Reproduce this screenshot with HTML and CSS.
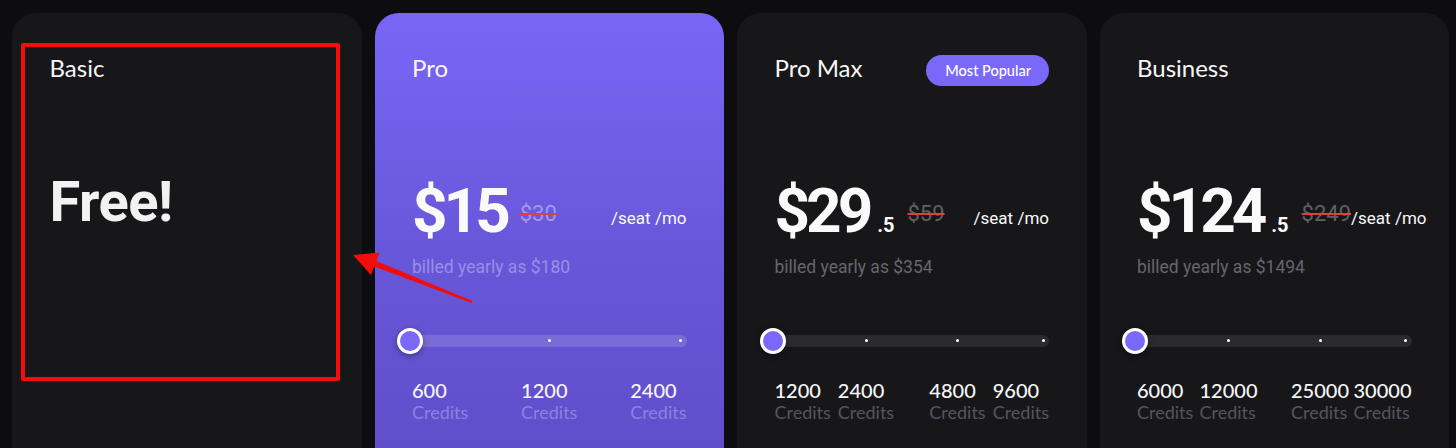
FILE: index.html
```html
<!DOCTYPE html>
<html lang="en">
<head>
<meta charset="utf-8">
<title>Pricing</title>
<link rel="stylesheet" href="styles.css">
</head>
<body>
<main class="plans">
  <section class="card">
    <div class="head"><h2 class="name">Basic</h2></div>
    <div class="free">Free!</div>
  </section>

  <section class="card card-pro">
    <div class="head"><h2 class="name">Pro</h2></div>
    <div class="price-row">
      <div class="price">
        <div class="amount-wrap"><span class="amount">$15</span></div>
        <span class="was">$30</span>
      </div>
      <span class="per">/seat /mo</span>
    </div>
    <p class="billed">billed yearly as $180</p>
    <div class="slider">
      <div class="track"></div>
      <span class="dot" style="left:50%"></span>
      <span class="dot dot-end"></span>
      <span class="thumb"></span>
    </div>
    <div class="ticks">
      <div class="tick"><div class="tick-in"><b>600</b><span>Credits</span></div></div>
      <div class="tick"><div class="tick-in"><b>1200</b><span>Credits</span></div></div>
      <div class="tick"><div class="tick-in"><b>2400</b><span>Credits</span></div></div>
    </div>
  </section>

  <section class="card">
    <div class="head"><h2 class="name">Pro Max</h2><span class="badge">Most Popular</span></div>
    <div class="price-row">
      <div class="price">
        <div class="amount-wrap"><span class="amount">$29</span><span class="cents">.5</span></div>
        <span class="was">$59</span>
      </div>
      <span class="per">/seat /mo</span>
    </div>
    <p class="billed">billed yearly as $354</p>
    <div class="slider">
      <div class="track"></div>
      <span class="dot" style="left:33.4%"></span>
      <span class="dot" style="left:66.8%"></span>
      <span class="dot dot-end"></span>
      <span class="thumb"></span>
    </div>
    <div class="ticks">
      <div class="tick"><div class="tick-in"><b>1200</b><span>Credits</span></div></div>
      <div class="tick"><div class="tick-in"><b>2400</b><span>Credits</span></div></div>
      <div class="tick"><div class="tick-in"><b>4800</b><span>Credits</span></div></div>
      <div class="tick"><div class="tick-in"><b>9600</b><span>Credits</span></div></div>
    </div>
  </section>

  <section class="card">
    <div class="head"><h2 class="name">Business</h2></div>
    <div class="price-row">
      <div class="price">
        <div class="amount-wrap"><span class="amount">$124</span><span class="cents">.5</span></div>
        <span class="was">$249</span>
      </div>
      <span class="per">/seat /mo</span>
    </div>
    <p class="billed">billed yearly as $1494</p>
    <div class="slider">
      <div class="track"></div>
      <span class="dot" style="left:33.4%"></span>
      <span class="dot" style="left:66.8%"></span>
      <span class="dot dot-end"></span>
      <span class="thumb"></span>
    </div>
    <div class="ticks">
      <div class="tick"><div class="tick-in"><b>6000</b><span>Credits</span></div></div>
      <div class="tick"><div class="tick-in"><b>12000</b><span>Credits</span></div></div>
      <div class="tick"><div class="tick-in"><b>25000</b><span>Credits</span></div></div>
      <div class="tick"><div class="tick-in"><b>30000</b><span>Credits</span></div></div>
    </div>
  </section>
</main>

<div class="mark-box"></div>
<svg class="mark-arrow" width="1456" height="448" viewBox="0 0 1456 448" aria-hidden="true">
  <polygon fill="#f20d0d" points="353,255 379.7,252.6 376.4,261 472.4,301.1 471.6,302.9 374.2,266.6 370.9,275"/>
</svg>
</body>
</html>
```

FILE: styles.css
```css
* { box-sizing: border-box; }

html, body {
  margin: 0;
  height: 100%;
  background: #0d0d0f;
  overflow: hidden;
}

body {
  font-family: "Roboto", "Liberation Sans", sans-serif;
  color: #f4f4f5;
}

.plans {
  display: grid;
  grid-template-columns: repeat(4, minmax(0, 1fr));
  gap: 13px;
  padding: 13px 7px 0 12px;
}

.card {
  background: #17171a;
  border-radius: 24px;
  height: 480px;
  padding: 42px 37.5px 0;
  display: flex;
  flex-direction: column;
  min-width: 0;
}

.card-pro {
  background: linear-gradient(180deg, #7a66f6 0%, #6a58dc 45%, #5e4cc6 100%);
}

.head {
  display: flex;
  align-items: center;
  justify-content: space-between;
  min-height: 31px;
}

.name {
  margin: 0 0 5px;
  font-family: "Lato", sans-serif;
  font-weight: 400;
  font-size: 24px;
  line-height: 1;
  color: #f6f6f7;
}

.badge {
  background: #7b68f8;
  color: #fff;
  font-family: "Lato", sans-serif;
  font-weight: 500;
  font-size: 14.5px;
  height: 31px;
  display: flex;
  align-items: center;
  padding: 0 18px 0 19px;
  border-radius: 16px;
}

.free {
  margin-top: 85px;
  font-weight: 700;
  font-size: 56px;
  line-height: 62px;
  letter-spacing: -0.5px;
  color: #f2f2f3;
}

.price-row {
  margin-top: 94px;
  display: flex;
  align-items: center;
  justify-content: space-between;
  height: 62px;
}

.price {
  display: flex;
  align-items: center;
}

.amount-wrap {
  display: flex;
  align-items: baseline;
}

.amount {
  font-weight: 700;
  font-size: 62px;
  line-height: 62px;
  letter-spacing: -4px;
  color: #fafafa;
}

.cents {
  margin-left: 8px;
  font-weight: 700;
  font-size: 20px;
  color: #fafafa;
}

.was {
  margin-left: 13px;
  margin-top: 6px;
  font-size: 22px;
  line-height: 22px;
  color: #5f5f66;
  text-decoration: line-through;
  text-decoration-color: #e0403e;
  text-decoration-thickness: 2px;
}

.card-pro .was { color: #a498ee; }

.per {
  margin-top: 14px;
  font-size: 17px;
  line-height: 20px;
  color: #fafafa;
  white-space: nowrap;
}

.billed {
  margin: 15px 0 0;
  font-size: 17.5px;
  line-height: 20px;
  color: #66666d;
}

.card-pro .billed { color: #9a8ee6; }

.slider {
  position: relative;
  margin-top: 50.5px;
  height: 26px;
}

.track {
  margin: 7px 0 0 -13px;
  height: 12px;
  border-radius: 6px;
  background: #2a2a2f;
}

.card-pro .track { background: rgba(255, 255, 255, 0.14); }

.dot {
  position: absolute;
  top: 11.5px;
  width: 3px;
  height: 3px;
  margin-left: -1.5px;
  border-radius: 50%;
  background: #ffffff;
}

.dot-end { left: calc(100% - 6px); }

.thumb {
  position: absolute;
  left: -15px;
  top: 0;
  width: 26px;
  height: 26px;
  border-radius: 50%;
  background: #7b68f8;
  border: 3px solid #ffffff;
  box-shadow: 0 2px 6px rgba(0, 0, 0, 0.35);
}

.ticks {
  margin-top: 24px;
  display: flex;
  justify-content: space-between;
}

.tick {
  width: 0;
  display: flex;
  justify-content: center;
}

.tick:first-child { justify-content: flex-start; }
.tick:last-child { justify-content: flex-end; }

.tick-in {
  display: flex;
  flex-direction: column;
  flex-shrink: 0;
  white-space: nowrap;
  font-family: "Lato", sans-serif;
}

.tick-in b {
  font-weight: 500;
  font-size: 20px;
  line-height: 24px;
  color: #f6f6f7;
}

.tick-in span {
  font-size: 18px;
  line-height: 21px;
  color: #55555c;
}

.card-pro .tick-in span { color: #8e81e0; }

.mark-box {
  position: absolute;
  left: 21px;
  top: 43px;
  width: 319px;
  height: 338px;
  border: 4px solid #f70c0c;
  border-radius: 2px;
}

.mark-arrow {
  position: absolute;
  left: 0;
  top: 0;
}
```
